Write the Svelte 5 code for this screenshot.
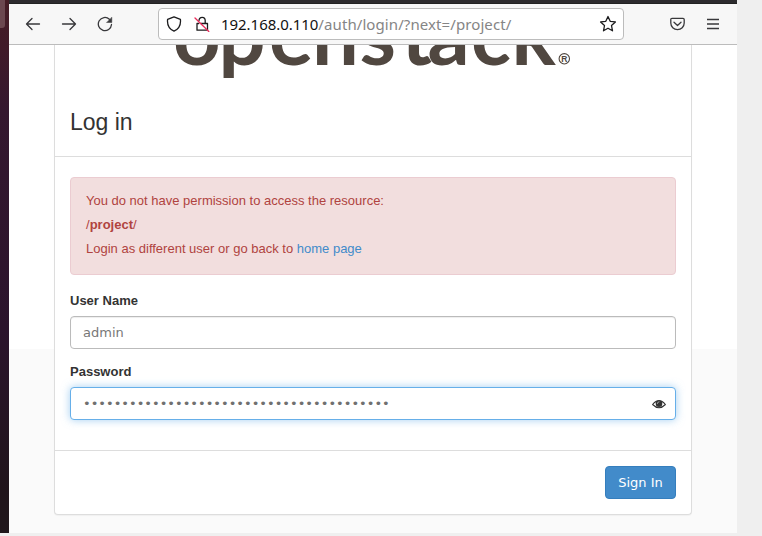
<script>
  const logoX = [173, 218.5, 269, 312, 359.5, 401, 427.5, 471, 511.5];
  let username = $state('admin');
  const mask = '•'.repeat(40);
</script>

<div class="screen">
  <aside class="dock"><span></span></aside>
  <main class="browser">
    <div class="titlebar"></div>
    <nav class="toolbar">
      <svg class="arrow" width="16" height="16" viewBox="0 0 16 16"><path d="M14.5 8H1.5M7 2.5 1.5 8 7 13.5" /></svg>
      <svg class="forward" width="16" height="16" viewBox="0 0 16 16"><path d="M1.5 8h13M9 2.5 14.5 8 9 13.5" /></svg>
      <svg class="reload" width="16" height="16" viewBox="0 0 16 16"><path d="M12.4 3.2A6.6 6.6 0 1 0 14.5 8.500" /><path class="fill" d="M14.8 1.500v5H9.800z" /></svg>
      <div class="address">
        <svg class="shield" width="16" height="16" viewBox="0 0 16 16"><path d="M8 .8 14.4 3.3C15 8.500 12.700 13 8 15.200 3.300 13 1 8.500 1.600 3.300z" /></svg>
        <svg class="lock" width="16" height="16" viewBox="0 0 16 16"><path d="M5 4.500C5.200 .2 11.200 .2 11.200 4.500V7.500M4.800 7.500H3v6.700h10.500V7.500H7" /><path class="slash" d="M1 2 14.800 15.500" /></svg>
        <div class="url"><span class="host">192.168.0.110</span><span class="path">/auth/login/?next=/project/</span></div>
        <svg class="star" width="18" height="18" viewBox="0 0 18 18"><path d="m9 1.500 2.200 4.800 5.200.6-3.900 3.600 1 5.300L9 13.200l-4.500 2.600 1-5.300-3.900-3.600 5.200-.6z" /></svg>
      </div>
      <svg class="pocket" width="15" height="15" viewBox="0 0 15 15"><path d="M2 1.300h11q1.200 0 1.200 1.200V6A6.700 6.700 0 0 1 .8 6V2.500Q.8 1.300 2 1.300zM4 5.300l3.500 3.200L11 5.300" /></svg>
      <svg class="menu" width="12" height="12" viewBox="0 0 12 12"><path d="M0 1.500h12M0 6h12M0 10.500h12" /></svg>
    </nav>
    <div class="page">
      <section class="card">
        <header>
          <svg class="logo" width="636" height="33" viewBox="55 45 636 33" role="img" aria-label="openstack">
            <text x={logoX.join(' ')} y="64.500">openstack</text>
            <circle cx="564.300" cy="58.800" r="5.200" />
            <text class="reg" x="561.300" y="62">R</text>
          </svg>
          <h1>Log in</h1>
        </header>
        <div class="body">
          <div class="alert">
            <p>You do not have permission to access the resource:</p>
            <p>/<strong>project</strong>/</p>
            <p>Login as different user or go back to <a href="#home">home page</a></p>
          </div>
          <label for="user">User Name</label>
          <input id="user" bind:value={username} />
          <label class="second" for="pass">Password</label>
          <div class="password" id="pass">
            <span>{mask}</span>
            <svg width="14" height="10" viewBox="0 0 14 10"><path d="M.6 5.500Q7-2.300 13.400 5.500 7 12 .6 5.500z" /><circle cx="7" cy="4.800" r="3.300" /><path class="glint" d="M5.300 4.500Q5.300 2.900 7 2.800" /></svg>
          </div>
        </div>
        <footer><button>Sign In</button></footer>
      </section>
    </div>
  </main>
</div>

<style>
  :global(body) { background: #efefef; overflow: hidden; }
  * { box-sizing: border-box; }
  .screen { width: 762px; height: 536px; display: flex; background: #efefef; font-family: "Liberation Sans", Arial, sans-serif; color: #333; }
  .dock { width: 9px; height: 533px; background: linear-gradient(#451c25, #401a29 50px, #35182f 110px, #2b142c 330px, #20141b 490px, #20171b); }
  .dock span { display: block; width: 5px; height: 28px; background: #6b474f; border-radius: 0 0 3px 0; }
  .browser { width: 728px; height: 533px; display: flex; flex-direction: column; }
  .titlebar { height: 4px; flex: none; background: #2d2b2e; border-bottom: 1px solid #222; }
  .toolbar { height: 41px; flex: none; display: flex; align-items: center; background: #f7f7f7; border-bottom: 1px solid #bcbcbc; padding-left: 16px; }
  svg { flex: none; fill: none; stroke: #38383b; stroke-width: 1.3; stroke-linecap: round; stroke-linejoin: round; }
  .forward { margin-left: 20px; }
  .reload { margin-left: 20px; }
  .reload .fill { fill: #38383b; stroke-width: .5; }
  .address { width: 466px; height: 32px; margin-left: 45px; display: flex; align-items: center; background: #fff; border: 1px solid #bcbcbc; border-radius: 4px; padding: 0 6px 0 7px; }
  .address svg { stroke: #1c1c1e; }
  .lock { margin-left: 12px; }
  .address .slash { stroke: #e92c5b; }
  .url { display: flex; margin-left: 11px; font: 15px/22px "Noto Sans", sans-serif; color: #858585; white-space: nowrap; }
  .host { color: #111; letter-spacing: -.04px; }
  .path { letter-spacing: .09px; }
  .star { margin-left: auto; }
  .pocket { margin-left: 46px; }
  .menu { margin-left: 22px; stroke-linecap: butt; }
  .page { height: 488px; padding-left: 45px; background: linear-gradient(#fff 304px, #fafafa 304px); overflow: hidden; }
  .card { width: 638px; height: 470px; background: #fff; border: 1px solid #ddd; border-top: 0; border-radius: 0 0 4px 4px; box-shadow: 0 1px 1px rgba(0,0,0,.04); }
  header { height: 112px; border-bottom: 1px solid #ddd; }
  .logo { display: block; overflow: hidden; stroke: #504740; stroke-width: 1.100; }
  .logo text { font: 700 83px Lato, sans-serif; fill: #504740; stroke: none; }
  .logo .reg { font: bold 8.500px "Liberation Sans", sans-serif; }
  h1 { margin: 31px 0 0 15px; font-size: 23px; line-height: 27px; font-weight: 400; }
  .body { height: 293px; padding: 20px 15px 0; }
  .alert { height: 98px; background: #f2dede; border: 1px solid #ebccd1; border-radius: 4px; padding: 11px 15px; color: #b04340; }
  p { margin: 0; font-size: 13px; line-height: 24px; }
  a { color: #428bca; text-decoration: none; }
  label { display: block; height: 18px; margin: 17px 0 6px; font-size: 13px; line-height: 18px; font-weight: 700; }
  label.second { margin-top: 14px; }
  input, .password { width: 606px; height: 33px; padding: 0 9px 0 12px; border: 1px solid #bbb; border-radius: 4px; background: #fff; box-shadow: inset 0 1px 1px rgba(0,0,0,.07); font: 13px/19px "DejaVu Sans", sans-serif; color: #777; }
  input { display: block; outline: none; }
  .password { display: flex; align-items: center; justify-content: space-between; border-color: #66afe9; box-shadow: 0 0 8px rgba(102,175,233,.6); color: #707070; }
  .password svg { stroke: #333; stroke-width: 1.100; }
  .password circle { fill: #333; stroke: none; }
  .password .glint { stroke: #bbb; stroke-width: .8; }
  footer { height: 64px; border-top: 1px solid #ddd; padding: 15px; display: flex; justify-content: flex-end; }
  button { width: 71px; height: 33px; padding: 0; border: 1px solid #357ebd; border-radius: 4px; background: #428bca; color: #fff; font: 13px "DejaVu Sans", sans-serif; }
</style>
